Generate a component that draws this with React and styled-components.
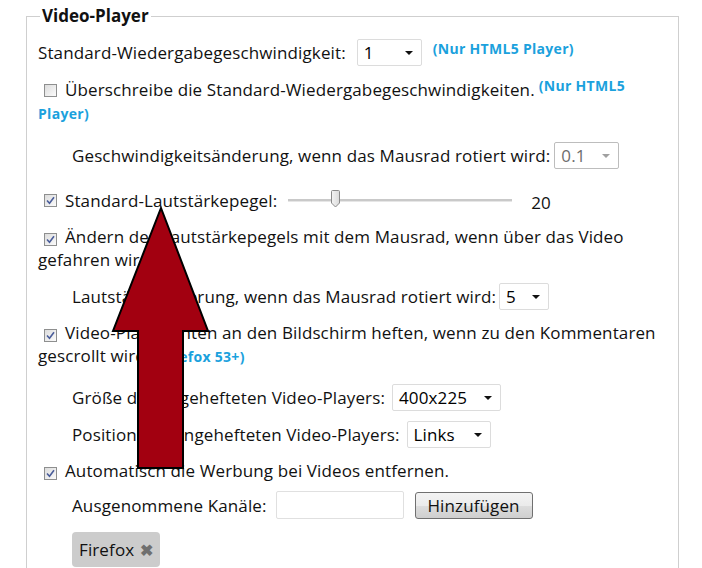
import React from 'react';
import styled, { createGlobalStyle } from 'styled-components';

const GlobalStyle = createGlobalStyle`
  body {
    margin: 0;
    background: #fff;
    font-family: "Open Sans", "Noto Sans", sans-serif;
    color: #111;
  }
`;

const Page = styled.div`
  position: relative;
  width: 702px;
  height: 568px;
  overflow: hidden;
  padding: 5px 0 0 26px;
  box-sizing: border-box;
`;

const Fieldset = styled.fieldset`
  width: 653px;
  box-sizing: border-box;
  margin: 0;
  padding: 3px 10px 20px 11px;
  border: 1px solid #cfcfcf;
  border-bottom: none;
  font-size: 17px;
  letter-spacing: 0.12px;
`;

const Legend = styled.legend`
  font-size: 17px;
  font-weight: 700;
  letter-spacing: 0;
  padding: 0 2px;
  margin-left: 2px;
  line-height: 22px;
`;

const Row = styled.div`
  display: flex;
  align-items: center;
  gap: ${p => p.$gap ?? 7}px;
  margin-top: ${p => p.$mt || 0}px;
  padding-left: ${p => (p.$indent ? 34 : 0)}px;
  min-height: ${p => p.$h || 23}px;
  white-space: nowrap;
`;

const Para = styled.p`
  margin: ${p => p.$mt || 0}px 0 0;
  line-height: ${p => p.$lh || 23}px;
`;

const Note = styled.span`
  color: #1ba1dd;
  font-weight: 700;
  font-size: 14px;
  letter-spacing: 0.3px;
  position: relative;
  top: ${p => p.$raise || 0}px;
  margin-left: ${p => p.$ml || 0}px;
`;

const Box = styled.span`
  display: inline-flex;
  align-items: center;
  justify-content: center;
  width: 13px;
  height: 13px;
  box-sizing: border-box;
  border: 1px solid #8e8f8f;
  background: linear-gradient(135deg, #dcdcdc, #fbfbfb);
  margin: 0 8px 0 6px;
  vertical-align: -1px;
`;

const Checkbox = ({ checked }) => (
  <Box>
    {checked && (
      <svg width="9" height="9" viewBox="0 0 9 9">
        <path d="M1 4.5 L3.5 7.2 L8 1.2" fill="none" stroke="#4a5d9a" strokeWidth="1.6" />
      </svg>
    )}
  </Box>
);

const SelectBox = styled.div`
  display: inline-flex;
  align-items: center;
  justify-content: space-between;
  box-sizing: border-box;
  width: ${p => p.$w}px;
  height: 27px;
  padding: 0 8px 0 6px;
  border: 1px solid ${p => (p.$disabled ? '#bdbdbd' : '#dcdcdc')};
  border-radius: 2px;
  background: #fff;
  color: ${p => (p.$disabled ? '#6d6d6d' : '#000')};
  font-size: 17px;
`;

const Caret = styled.span`
  width: 0;
  height: 0;
  border-left: 4px solid transparent;
  border-right: 4px solid transparent;
  border-top: 4px solid ${p => (p.$disabled ? '#a0a0a0' : '#111')};
`;

const Select = ({ value, width, disabled }) => (
  <SelectBox $w={width} $disabled={disabled}>
    <span>{value}</span>
    <Caret $disabled={disabled} />
  </SelectBox>
);

const Track = styled.div`
  position: relative;
  width: 224px;
  height: 2px;
  background: #c9c9c9;
  border-bottom: 1px solid #e6e6e6;
  margin: 0 19px 0 11px;
`;

const Thumb = styled.svg`
  position: absolute;
  left: 42px;
  top: -9px;
`;

const Value = styled.span`
  padding-top: 4px;
`;

const TextInput = styled.div`
  width: 128px;
  height: 28px;
  box-sizing: border-box;
  border: 1px solid #e0e0e0;
  border-radius: 2px;
  margin-left: 2px;
`;

const Button = styled.div`
  width: 118px;
  height: 27px;
  box-sizing: border-box;
  display: flex;
  align-items: center;
  justify-content: center;
  border: 1px solid #707070;
  border-radius: 3px;
  background: linear-gradient(#f3f3f3 0%, #ebebeb 50%, #dddddd 51%, #cfcfcf 100%);
  font-size: 17px;
  margin-left: 4px;
`;

const Tag = styled.div`
  display: inline-flex;
  align-items: center;
  gap: 6px;
  height: 35px;
  padding: 0 7px;
  margin: 13px 0 0 34px;
  background: #cccccc;
  border-radius: 4px;
  font-size: 17px;
`;

const TagClose = styled.span`
  color: #6f6f6f;
  font-size: 16px;
  font-weight: 700;
`;

const Arrow = styled.svg`
  position: absolute;
  left: 0;
  top: 0;
  pointer-events: none;
`;

export default function App() {
  return (
    <>
      <GlobalStyle />
      <Page>
        <Fieldset>
          <Legend>Video-Player</Legend>
          <Row $mt={9} $h={27} $gap={11}>
            <span>Standard-Wiedergabegeschwindigkeit:</span>
            <Select value="1" width={65} />
            <Note $raise={-4}>(Nur HTML5 Player)</Note>
          </Row>
          <Para $mt={10} $lh={27}>
            <Checkbox />
            Überschreibe die Standard-Wiedergabegeschwindigkeiten.
            <Note $raise={-5} $ml={4}>(Nur HTML5 Player)</Note>
          </Para>
          <Row $indent $mt={10} $h={27} $gap={4}>
            <span>Geschwindigkeitsänderung, wenn das Mausrad rotiert wird:</span>
            <Select value="0.1" width={65} disabled />
          </Row>
          <Row $mt={18} $gap={0}>
            <Checkbox checked />
            <span>Standard-Lautstärkepegel:</span>
            <Track>
              <Thumb width="11" height="18" viewBox="0 0 11 18">
                <defs>
                  <linearGradient id="thumb" x1="0" x2="1">
                    <stop offset="0" stopColor="#f4f4f4" />
                    <stop offset="1" stopColor="#dadada" />
                  </linearGradient>
                </defs>
                <path d="M1.5 1.5 Q1.5 0.5 2.5 0.5 L8.5 0.5 Q9.5 0.5 9.5 1.5 L9.5 13 L5.5 17 L1.5 13 Z" fill="url(#thumb)" stroke="#8a8a8a" />
              </Thumb>
            </Track>
            <Value>20</Value>
          </Row>
          <Para $mt={11}>
            <Checkbox checked />
            Ändern des Lautstärkepegels mit dem Mausrad, wenn über das Video gefahren wird.
          </Para>
          <Row $indent $mt={12} $h={27} $gap={3}>
            <span>Lautstärkeänderung, wenn das Mausrad rotiert wird:</span>
            <Select value="5" width={50} />
          </Row>
          <Para $mt={11}>
            <Checkbox checked />
            Video-Player unten an den Bildschirm heften, wenn zu den Kommentaren gescrollt wird.{' '}
            <Note>(Firefox 53+)</Note>
          </Para>
          <Row $indent $mt={16} $h={27}>
            <span>Größe des angehefteten Video-Players:</span>
            <Select value="400x225" width={109} />
          </Row>
          <Row $indent $mt={10} $h={27}>
            <span>Position des angehefteten Video-Players:</span>
            <Select value="Links" width={84} />
          </Row>
          <Para $mt={11}>
            <Checkbox checked />
            Automatisch die Werbung bei Videos entfernen.
          </Para>
          <Row $indent $mt={9} $h={28}>
            <span>Ausgenommene Kanäle:</span>
            <TextInput />
            <Button>Hinzufügen</Button>
          </Row>
          <Tag>
            Firefox <TagClose>✖</TagClose>
          </Tag>
        </Fieldset>
        <Arrow width="702" height="568" viewBox="0 0 702 568">
          <polygon
            points="161,208 208,331 183,331 183,468 138,468 138,331 113,331"
            fill="#a20010"
            stroke="#000"
            strokeWidth="2"
            strokeLinejoin="miter"
          />
        </Arrow>
      </Page>
    </>
  );
}
